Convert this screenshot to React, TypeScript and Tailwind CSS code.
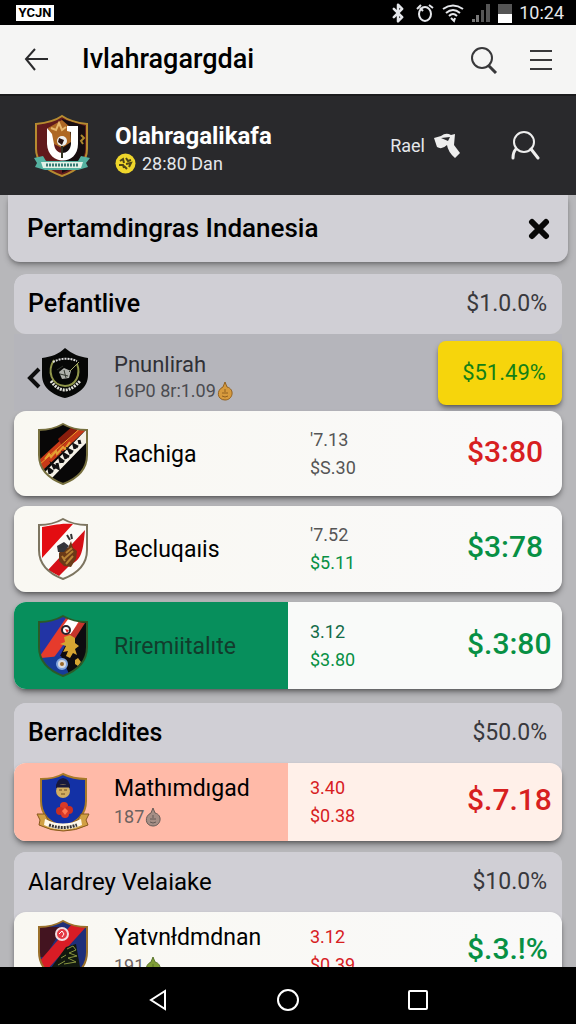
import type { ReactNode } from "react";
import { Bluetooth } from "lucide-react";

function Crest({ id, border, children }: { id: string; border: string; children: ReactNode }) {
  const outline = "M27 2 C34 6 42 8 51 8 V33 C51 48 40 57 27 62 C14 57 3 48 3 33 V8 C12 8 20 6 27 2 Z";
  return (
    <svg viewBox="0 0 54 64" className="h-16 w-[54px] shrink-0" aria-hidden="true">
      <defs>
        <clipPath id={id}>
          <path d={outline} />
        </clipPath>
      </defs>
      <g clipPath={`url(#${id})`}>{children}</g>
      <path d={outline} fill="none" stroke={border} strokeWidth="2" />
    </svg>
  );
}

function RachigaCrest() {
  return (
    <Crest id="rachiga" border="#77703f">
      <rect width="54" height="64" fill="#080707" />
      <path d="M2 39 L42 2 L52 6 L6 49 Z" fill="#c83a18" />
      <path d="M22 17 L38 3 L46 4 L26 24 Z" fill="#8a1d0c" />
      <path d="M3 43 L48 3" stroke="#f0a12c" strokeWidth="1" />
      <path d="M9 37 l4 -5 l2 3 l5 -6 l1 3 l6 -7 l2 2 l5 -7" stroke="#e3a132" strokeWidth="2" fill="none" />
      <path d="M9 50 L50 8 L54 17 L15 57 Z" fill="#f5f1e6" />
      <path d="M14 52 l-1 -5 l4 3 M19 47 l-2 -4 l5 3 l-1 -5 M25 41 l-1 -4 l4 3 M30 37 l-2 -5 l5 3 M35 32 l-2 -4 l4 2 M39 27 l-1 -4 l4 2 M44 22 l-1 -4" stroke="#111" strokeWidth="3" fill="none" />
      <path d="M14 59 L54 18 V64 H14 Z" fill="#080707" />
    </Crest>
  );
}

function BeclugaCrest() {
  return (
    <Crest id="becluga" border="#7d7560">
      <rect width="54" height="64" fill="#fbfaf7" />
      <path d="M6 10 C16 9 22 6 37 7 L6 41 Z" fill="#e30d12" />
      <path d="M12 53 L49 13 C47 33 46 43 35 47 L23 59 Z" fill="#d50f16" />
      <path d="M23 36 l5 -7 l4 2 l3 -7 l2 7 l4 3 l-1 8 l-5 8 l-7 -1 l-5 -5 Z" fill="#6b3a17" />
      <path d="M21 29 l7 -4 l5 4 l-5 6 l-6 0 Z" fill="#34343b" />
      <path d="M30 36 l6 -5 M28 42 l9 -8 M30 47 l7 -8 M26 39 l3 5" stroke="#b78335" strokeWidth="2" />
      <path d="M31 18 l3 5 M35 17 l1 5 M23 31 l5 -2" stroke="#333" strokeWidth="2" />
    </Crest>
  );
}

function RiremCrest() {
  return (
    <Crest id="rirem" border="#2b5a28">
      <rect width="54" height="64" fill="#2234a5" />
      <path d="M0 48 L30 4 L46 6 L10 54 Z" fill="#e63b2c" />
      <path d="M27 12 L33 4 L43 7 L35 20 L27 19 Z" fill="#fff" />
      <path d="M32 26 L46 6 H54 V60 H32 L24 42 Z" fill="#0d0c10" />
      <path d="M30 26 L44 8 L49 9 L33 34 Z" fill="#c5352b" />
      <circle cx="30" cy="16" r="4" fill="none" stroke="#27232c" strokeWidth="2" />
      <path d="M29 15 l4 1 l-2 3" fill="#d22" />
      <path d="M28 23 l6 -2 l5 3 l0 5 l4 3 l-4 3 l2 6 l-4 -2 l-3 5 l-4 -2 l2 -5 l-5 1 l3 -6 l-6 -2 l5 -2 Z" fill="#d5a532" />
      <path d="M39 46 l3 -2 l3 4 l-3 4 l-3 -2 Z" fill="#d5a532" />
      <path d="M5 44 L25 42 L34 62 H16 Z" fill="#173c98" />
      <circle cx="26" cy="50" r="5" fill="#d9dbe1" stroke="#7fa4df" strokeWidth="2" />
      <circle cx="26" cy="50" r="2" fill="#9a692b" />
    </Crest>
  );
}

function YatvanCrest() {
  return (
    <Crest id="yatvan" border="#9b712b">
      <rect width="54" height="64" fill="#1f2f7a" />
      <path d="M3 8 H27 L9 38 H3 Z" fill="#431420" />
      <path d="M2 44 L36 5 L50 8 L9 53 Z" fill="#d81c25" />
      <path d="M10 56 L30 28 L40 25 L44 48 L28 62 Z" fill="#11180f" />
      <circle cx="26" cy="15" r="6" fill="#e53843" stroke="#f3dce0" strokeWidth="2" />
      <path d="M23 15 l3 -3 l2 3 l-2 3" stroke="#fff" fill="none" />
      <path d="M31 30 l6 -3 l3 4 l-7 3 l8 3 l-9 2 l8 4 l-12 2 M25 39 l5 -3 M22 46 l7 -4" stroke="#899540" strokeWidth="1" fill="none" />
    </Crest>
  );
}

function MathCrest() {
  return (
    <svg viewBox="0 0 54 60" className="h-[60px] w-[54px] shrink-0" aria-hidden="true">
      <path d="M27 2 C35 6 42 7 50 7 V29 C50 43 40 51 27 55 C14 51 5 43 5 29 V7 C13 7 20 6 27 2 Z" fill="#1331a6" stroke="#a87a28" strokeWidth="2" />
      <path d="M20 16 Q20 7 27 6 Q34 7 34 16 Z" fill="#17183c" />
      <circle cx="27" cy="19" r="7" fill="#d2ad61" />
      <path d="M20 14 h14" stroke="#17183c" strokeWidth="3" />
      <path d="M23 18 h3 M28 18 h3 M25 22 h4" stroke="#6b4a20" strokeWidth="1" fill="none" />
      <circle cx="28" cy="34" r="4" fill="#d93a28" />
      <circle cx="24" cy="39" r="4" fill="#c92f22" />
      <circle cx="33" cy="38" r="4" fill="#c92f22" />
      <circle cx="29" cy="42" r="4" fill="#d93a28" />
      <path d="M26 39 l3 -3 l3 3 l-3 4 Z" fill="#ff7651" />
      <path d="M1 42 l8 0 l3 6 q15 9 30 0 l3 -6 l8 0 l-3 6 l2 5 q-25 12 -49 0 l1 -5 Z" fill="#d1a043" stroke="#88571f" />
      <path d="M9 47 q18 9 36 0 l1 6 q-19 9 -38 0 Z" fill="#fff8e9" />
      <path d="M13 53 q14 5 28 0" fill="none" stroke="#383536" strokeWidth="3" strokeDasharray="2 1" />
    </svg>
  );
}

function BlackCrest() {
  return (
    <svg viewBox="0 0 48 52" className="h-[52px] w-12 shrink-0" aria-hidden="true">
      <path d="M24 1 C31 7 39 10 47 11 V28 C47 41 36 48 24 51 C12 48 1 41 1 28 V11 C10 10 18 7 24 1 Z" fill="#060706" />
      <path d="M13 13 C6 24 10 38 24 39 C35 39 40 27 36 17" fill="none" stroke="#90964a" strokeWidth="2" />
      <path d="M12 15 Q24 9 36 14" fill="none" stroke="#ddd" strokeWidth="2" strokeDasharray="2 1" />
      <path d="M10 34 Q23 52 39 34" fill="none" stroke="#e3e3dc" strokeWidth="3" strokeDasharray="2 1" />
      <path d="M18 25 l5 -4 l7 3 l-2 7 l-7 1 Z" fill="#aeb0aa" />
      <path d="M19 27 l8 2 M23 23 l2 8 M28 25 l10 -10 M16 23 l6 -4" stroke="#30342c" strokeWidth="1" />
      <path d="M29 24 L38 15" stroke="#a4a96a" />
    </svg>
  );
}

function GarudaCrest() {
  return (
    <svg viewBox="0 0 58 64" className="h-16 w-[58px] shrink-0" aria-hidden="true">
      <path d="M29 2 C36 7 45 9 54 10 V35 C54 49 43 57 29 62 C15 57 3 49 3 35 V10 C13 9 22 7 29 2 Z" fill="#611a1c" stroke="#b68b30" strokeWidth="2" />
      <path d="M29 5 L52 12 V38 C50 48 40 55 29 59 Z" fill="#170e10" />
      <path d="M15 14 l14 -8 l8 7 l1 15 l-9 6 l-10 -5 Z" fill="#ae6824" />
      <path d="M18 14 l5 2 l3 -7 l3 7 l4 -3" stroke="#e8b76d" strokeWidth="2" fill="none" />
      <path d="M14 14 V30 C15 52 45 52 45 30 V12 H34 V17 L38 18 V30 C37 42 22 42 21 30 L19 20 Z" fill="#fff" />
      <circle cx="29" cy="27" r="5" fill="#eee" />
      <path d="M26 24 l5 2 l-2 5 l-4 -3 Z" fill="#2a1413" />
      <path d="M29 32 V44" stroke="#332" strokeWidth="2" />
      <path d="M48 21 l3 3 l-3 3 l2 3" stroke="#ad862d" strokeWidth="2" fill="none" />
      <path d="M1 44 l9 -2 l3 5 h32 l3 -5 l9 2 l-4 5 l2 4 l-10 3 H12 l-10 -3 l2 -4 Z" fill="#55b2a1" />
      <path d="M8 48 h42 l-2 6 H10 Z" fill="#e2f1e7" />
      <path d="M13 51 h32" stroke="#397b75" strokeWidth="3" strokeDasharray="2 1" />
    </svg>
  );
}

function Drop({ fill, stroke }: { fill: string; stroke: string }) {
  return (
    <svg viewBox="0 0 16 20" className="h-5 w-4" aria-hidden="true">
      <path d="M8 1 L10 6 C18 8 16 19 8 19 C0 19 -1 9 6 6 Z" fill={fill} stroke={stroke} />
      <path d="M5 12 h6 M8 8 v3 M5 15 q3 2 6 0" stroke={stroke} fill="none" />
    </svg>
  );
}

function StatusBar() {
  return (
    <div className="flex h-[25px] shrink-0 items-center justify-between bg-black pl-4 pr-3 text-gray-200">
      <span className="flex h-4 w-[38px] items-center justify-center bg-white text-[13px] font-bold text-black">YCJN</span>
      <div className="flex items-center gap-[7px]">
        <Bluetooth className="size-5" strokeWidth={3} />
        <svg viewBox="0 0 20 20" className="size-5" fill="none" stroke="currentColor" strokeWidth="2" aria-hidden="true">
          <ellipse cx="10" cy="11" rx="6" ry="7" />
          <path d="M2 6 L6 2 M14 2 L18 5 M5 5 L8 8" />
        </svg>
        <svg viewBox="0 0 22 20" className="h-5 w-[22px]" fill="none" stroke="currentColor" strokeWidth="2" aria-hidden="true">
          <path d="M1 6 Q11 -1 21 6 M4 10 Q11 4 18 10 M7 13 Q11 9 15 13 M9 15 l3 3 l1 -3" />
        </svg>
        <svg viewBox="0 0 20 20" className="size-5" aria-hidden="true">
          <path d="M1 19 V16 H4 V19 Z M5 19 V12 H8 V19 Z" fill="#777" />
          <path d="M10 19 V7 H13 V19 Z M15 19 V1 H19 V19 Z" fill="#555" />
        </svg>
        <svg viewBox="0 0 14 20" className="h-5 w-3.5" aria-hidden="true">
          <path d="M0 1 h14 v19 H0 Z" fill="#555" />
          <path d="M0 11 h14 v9 H0 Z" fill="#fff" />
        </svg>
        <span className="text-lg leading-6">10:24</span>
      </div>
    </div>
  );
}

function AppBar() {
  return (
    <header className="flex h-[69px] shrink-0 items-center bg-[#f5f5f4] px-6">
      <button aria-label="Back" className="text-[#2b2b2d]">
        <svg viewBox="0 0 24 24" className="size-6" fill="none" stroke="currentColor" strokeWidth="2" aria-hidden="true">
          <path d="M24 11 H2 M11 1 L2 11 L11 22" />
        </svg>
      </button>
      <h1 className="ml-[34px] flex-1 text-[27px] font-medium text-black">Ivlahragargdai</h1>
      <button aria-label="Search" className="text-[#38383a]">
        <svg viewBox="0 0 28 28" className="size-7" fill="none" stroke="currentColor" strokeWidth="2" aria-hidden="true">
          <circle cx="12" cy="12" r="10" />
          <path d="M18 19 L26 27" strokeWidth="3" />
        </svg>
      </button>
      <button aria-label="Menu" className="ml-8 text-[#38383a]">
        <svg viewBox="0 0 22 22" className="size-[22px]" stroke="currentColor" strokeWidth="2" aria-hidden="true">
          <path d="M0 2 H22 M0 11 H22 M0 20 H22" />
        </svg>
      </button>
    </header>
  );
}

function ProfileBar() {
  return (
    <section className="flex h-[101px] shrink-0 items-center border-t-2 border-[#1b1b1d] bg-[#29292c] pl-[33px] pr-9 text-white">
      <GarudaCrest />
      <div className="ml-6 flex-1 pt-2">
        <h2 className="text-2xl leading-7 font-bold">Olahragalikafa</h2>
        <p className="flex items-center gap-1.5 text-lg leading-7 text-gray-200">
          <svg viewBox="0 0 21 21" className="size-[21px]" aria-hidden="true">
            <circle cx="10.5" cy="10.5" r="10" fill="#efd62b" />
            <path d="M5 8 l3 -2 l1 4 M11 5 l2 3 l3 -1 M4 12 h4 l1 3 M11 11 l5 -1 l-2 4 M9 13 l3 3" stroke="#4d4518" strokeWidth="2" fill="none" />
          </svg>
          28:80 Dan
        </p>
      </div>
      <button className="flex items-center gap-2 text-lg text-gray-200">
        Rael
        <svg viewBox="0 0 27 27" className="size-[27px]" aria-hidden="true">
          <path d="M1 6 L8 4 Q13 0 18 3 L22 2 L21 13 L27 21 L22 26 Q15 20 14 13 Q9 18 4 15 Z" fill="#eee" />
          <path d="M8 6 L17 5 L15 9 Z" fill="#29292c" />
        </svg>
      </button>
      <button aria-label="Account" className="ml-[50px]">
        <svg viewBox="0 0 30 30" className="size-[30px]" fill="none" stroke="#eee" strokeWidth="3" strokeLinecap="round" aria-hidden="true">
          <circle cx="14" cy="11" r="10" strokeWidth="2" />
          <path d="M6 18 Q3 21 3 27 M21 18 L28 27" />
        </svg>
      </button>
    </section>
  );
}

function SectionHeader({ title, percent, weight }: { title: string; percent: string; weight: string }) {
  return (
    <div className="flex h-[60px] items-center justify-between rounded-t-xl bg-[#d0cfd5] pl-[14px] pr-[15px]">
      <h3 className={`text-black ${weight}`}>{title}</h3>
      <span className="text-[23px] text-[#39393d]">{percent}</span>
    </div>
  );
}

type MatchProps = {
  crest: ReactNode;
  name: string;
  note?: ReactNode;
  top: string;
  bottom: string;
  price: string;
  card: string;
  left?: string;
  nameColor?: string;
  topColor: string;
  bottomColor: string;
  priceColor: string;
};

function MatchRow(props: MatchProps) {
  return (
    <li className={`grid grid-cols-2 overflow-hidden rounded-xl shadow-md shadow-black/40 ${props.card}`}>
      <div className={`flex items-center pl-[22px] ${props.left ?? ""}`}>
        {props.crest}
        <div className="ml-6 pt-0.5">
          <p className={`text-[23px] leading-7 ${props.nameColor ?? "text-black"}`}>{props.name}</p>
          {props.note && <p className="flex items-center gap-px text-lg leading-7 text-[#6d6260]">{props.note}</p>}
        </div>
      </div>
      <div className="flex items-center justify-between pl-[22px] pr-[18px]">
        <div className="text-lg leading-7">
          <p className={props.topColor}>{props.top}</p>
          <p className={props.bottomColor}>{props.bottom}</p>
        </div>
        <span className={`w-[77px] pb-1 text-3xl font-medium ${props.priceColor}`}>{props.price}</span>
      </div>
    </li>
  );
}

function FeaturedRow() {
  return (
    <div className="flex h-[77px] items-center bg-[#b5b5bb] pl-[13px]">
      <button aria-label="Previous" className="pt-2.5">
        <svg viewBox="0 0 14 22" className="h-[22px] w-3.5" fill="none" stroke="#0d0d0d" strokeWidth="4" aria-hidden="true">
          <path d="M12 2 L3 11 L12 20" />
        </svg>
      </button>
      <BlackCrest />
      <div className="ml-[25px] flex-1 pt-2">
        <p className="text-[22px] leading-7 text-[#303036]">Pnunlirah</p>
        <p className="flex items-center gap-px text-lg leading-6 text-[#4b4b50]">
          16P0 8r:1.09
          <Drop fill="#d69a3d" stroke="#916020" />
        </p>
      </div>
      <button className="h-16 w-[124px] rounded-lg bg-[#f6d50c] pl-2 text-[22px] text-[#138016] shadow-md shadow-black/40">$51.49%</button>
    </div>
  );
}

export default function App() {
  const cream = "bg-linear-to-r from-[#f9f8f2] to-[#f9f9f9]";
  const red = "text-[#d7201f]";
  const green = "text-[#079044]";

  return (
    <div className="flex h-screen flex-col bg-[#b7b7ba] font-[Roboto,sans-serif]">
      <StatusBar />
      <AppBar />
      <ProfileBar />
      <main className="min-h-0 flex-1 overflow-y-auto [scrollbar-width:none]">
        <div className="mx-2 flex h-[67px] items-center justify-between rounded-b-xl bg-[#d1d0d6] pl-[19px] pr-[18px] shadow-md shadow-black/30">
          <h2 className="text-[26px] font-medium text-black">Pertamdingras Indanesia</h2>
          <button aria-label="Close">
            <svg viewBox="0 0 22 22" className="size-[22px]" stroke="#080808" strokeWidth="6" strokeLinecap="round" aria-hidden="true">
              <path d="M4 4 L18 18 M18 4 L4 18" />
            </svg>
          </button>
        </div>

        <section className="mx-[14px] mt-3">
          <div className="overflow-hidden rounded-xl">
            <SectionHeader title="Pefantlive" percent="$1.0.0%" weight="text-[25px] font-medium" />
          </div>
          <FeaturedRow />
          <ul className="flex flex-col gap-[10px]">
            <MatchRow crest={<RachigaCrest />} name="Rachiga" top="'7.13" bottom="$S.30" price="$3:80" card={`h-[85px] ${cream}`} topColor="text-[#555]" bottomColor="text-[#555]" priceColor={red} />
            <MatchRow crest={<BeclugaCrest />} name="Becluqaıis" top="'7.52" bottom="$5.11" price="$3:78" card={`h-[86px] ${cream}`} topColor="text-[#555]" bottomColor={green} priceColor={green} />
            <MatchRow crest={<RiremCrest />} name="Riremiitalıte" top="3.12" bottom="$3.80" price="$.3:80" card="h-[87px] bg-[#f9faf9]" left="bg-[#078f5c]" nameColor="text-[#123c2c]" topColor="text-[#126b48]" bottomColor={green} priceColor={green} />
          </ul>
        </section>

        <section className="mx-[14px] mt-[14px] rounded-xl bg-[#d0cfd5]">
          <SectionHeader title="Berracldites" percent="$50.0%" weight="text-[25px] font-medium" />
          <ul>
            <MatchRow
              crest={<MathCrest />}
              name="Mathımdıgad"
              note={<>187 <Drop fill="#a58e85" stroke="#655a56" /></>}
              top="3.40"
              bottom="$0.38"
              price="$.7.18"
              card="h-[78px] bg-[#fff0e9]"
              left="bg-[#ffbaa8]"
              topColor={red}
              bottomColor={red}
              priceColor={red}
            />
          </ul>
        </section>

        <section className="mx-[14px] mt-[11px] rounded-xl bg-[#d0cfd5]">
          <SectionHeader title="Alardrey Velaiake" percent="$10.0%" weight="text-2xl font-normal" />
          <ul>
            <MatchRow
              crest={<YatvanCrest />}
              name="Yatvnłdmdnan"
              note={<>191 <Drop fill="#7f9d36" stroke="#58742a" /></>}
              top="3.12"
              bottom="$0.39"
              price="$.3.!%"
              card={`h-[78px] ${cream}`}
              topColor={red}
              bottomColor={red}
              priceColor={green}
            />
          </ul>
        </section>
      </main>

      <nav className="grid h-[57px] shrink-0 grid-cols-3 bg-black px-[93px] pt-2 text-white">
        <button aria-label="Back" className="flex items-center justify-center">
          <svg viewBox="0 0 20 22" className="h-[22px] w-5" fill="none" stroke="currentColor" strokeWidth="2" aria-hidden="true">
            <path d="M17 2 V20 L3 11 Z" />
          </svg>
        </button>
        <button aria-label="Home" className="flex items-center justify-center">
          <svg viewBox="0 0 24 24" className="size-6" fill="none" stroke="currentColor" strokeWidth="2" aria-hidden="true">
            <circle cx="12" cy="12" r="10" />
          </svg>
        </button>
        <button aria-label="Recent apps" className="flex items-center justify-center">
          <svg viewBox="0 0 22 22" className="size-[22px]" fill="none" stroke="currentColor" strokeWidth="2" aria-hidden="true">
            <rect x="2" y="2" width="18" height="18" rx="1" />
          </svg>
        </button>
      </nav>
    </div>
  );
}
